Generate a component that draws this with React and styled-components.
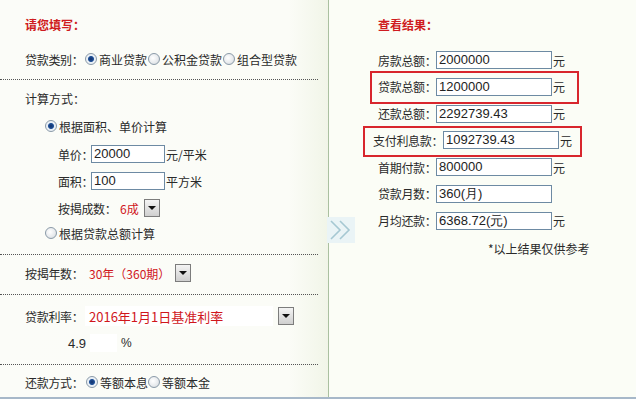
import styled, { createGlobalStyle } from 'styled-components'

const GlobalStyle = createGlobalStyle`
  html, body {
    margin: 0;
    padding: 0;
    background: #fbfdf6;
  }
  * {
    box-sizing: border-box;
  }
`

const Page = styled.div`
  display: flex;
  width: 636px;
  height: 399px;
  border-bottom: 2px solid #a7b8c9;
  font-family: "Noto Sans CJK SC", "Liberation Sans", sans-serif;
  font-size: 12px;
  color: #2a2a2a;
  overflow: hidden;
`

const LeftPanel = styled.div`
  width: 329px;
  flex-shrink: 0;
  display: flex;
  flex-direction: column;
  border-right: 1px solid #aac0a0;
  background: linear-gradient(to right, #fbfcf8 0%, #fbfcf7 88%, #f1f5e8 100%);
`

const RightPanel = styled.div`
  flex: 1;
  position: relative;
  display: flex;
  flex-direction: column;
  padding: 16px 0 0 49px;
  background: #fbfdf6;
`

const Section = styled.div`
  display: flex;
  flex-direction: column;
  margin-right: 10px;
  padding: ${p => p.$pt}px 0 ${p => p.$pb}px 25px;
  border-bottom: ${p => (p.$last ? 'none' : '1px dotted #555')};
`

const Title = styled.div`
  height: 18px;
  line-height: 18px;
  color: #cf1b20;
  font-weight: bold;
  font-size: 12px;
`

const Row = styled.div`
  display: flex;
  align-items: center;
  height: ${p => p.$h || 18}px;
  margin-top: ${p => p.$mt || 0}px;
  margin-left: ${p => p.$indent || 0}px;
  white-space: nowrap;
`

const Label = styled.span`
  display: inline-block;
  width: ${p => (p.$w ? `${p.$w}px` : 'auto')};
  letter-spacing: -0.3px;
`

const RedText = styled.span`
  color: #d0161c;
  margin-left: ${p => p.$ml || 0}px;
  font-size: ${p => p.$size || 12}px;
`

const RadioDot = styled.span`
  display: inline-block;
  width: 12px;
  height: 12px;
  margin: 0 2px 0 ${p => p.$ml || 0}px;
  border-radius: 50%;
  border: 1px solid #8a9aa8;
  background: ${p =>
    p.$checked
      ? 'radial-gradient(circle, #12306a 0, #1e4f96 2.5px, #e7eef5 3.5px, #f6f8fb 100%)'
      : 'radial-gradient(circle at 40% 40%, #ffffff 0, #e6e9ec 60%, #c9ced3 100%)'};
  flex-shrink: 0;
`

const TextBox = styled.div`
  width: ${p => p.$w}px;
  height: ${p => p.$h || 18}px;
  border: 1px solid #6d8aa3;
  background: #ffffff;
  font-family: "Liberation Sans", Arial, sans-serif;
  font-size: 13px;
  line-height: ${p => (p.$h || 18) - 2}px;
  padding-left: 2px;
  color: #222;
  flex-shrink: 0;
`

const Unit = styled.span`
  margin-left: 1px;
`

const DropButton = styled.span`
  display: inline-flex;
  align-items: center;
  justify-content: center;
  width: 16px;
  height: 18px;
  margin-left: ${p => p.$ml || 0}px;
  border: 1px solid #7c7c7c;
  background: linear-gradient(to bottom, #f4f4f4, #cfcfcf);
  flex-shrink: 0;

  &::after {
    content: '';
    border-left: 4px solid transparent;
    border-right: 4px solid transparent;
    border-top: 4px solid #111;
  }
`

const RateField = styled.div`
  display: flex;
  align-items: center;
  width: 188px;
  height: 20px;
  margin-left: 0;
  padding-left: 4px;
  background: #ffffff;
  color: #d0161c;
  font-size: 13px;
`

const RateValue = styled.span`
  margin-left: 43px;
  font-family: "Liberation Sans", Arial, sans-serif;
  font-size: 13px;
`

const RateBlank = styled.span`
  display: inline-block;
  width: 27px;
  height: 18px;
  margin-left: 4px;
  background: #ffffff;
`

const Percent = styled.span`
  margin-left: 4px;
  font-family: "Liberation Sans", Arial, sans-serif;
  font-size: 12px;
`

const ResultList = styled.div`
  display: flex;
  flex-direction: column;
  gap: 8.8px;
  margin-top: 17px;
`

const ResultRow = styled.div`
  position: relative;
  display: flex;
  align-items: center;
  height: 18px;
  margin-left: ${p => p.$shift || 0}px;
  white-space: nowrap;

  ${p =>
    p.$mark &&
    `
    &::after {
      content: '';
      position: absolute;
      left: ${p.$mark.left}px;
      top: ${p.$mark.top}px;
      width: ${p.$mark.width}px;
      height: ${p.$mark.height}px;
      border: 2px solid #d8262d;
      pointer-events: none;
    }
  `}
`

const Note = styled.div`
  margin: 11px 0 0 110px;
  height: 16px;
  line-height: 16px;
  font-size: 12px;
`

const Chevrons = styled.svg`
  position: absolute;
  left: -2px;
  top: 217px;
`

const results = [
  { label: '房款总额：', value: '2000000', unit: '元' },
  {
    label: '贷款总额：',
    value: '1200000',
    unit: '元',
    mark: { left: -8, top: -7, width: 205, height: 29 },
  },
  { label: '还款总额：', value: '2292739.43', unit: '元' },
  {
    label: '支付利息款：',
    value: '1092739.43',
    unit: '元',
    shift: -5,
    mark: { left: -10, top: -5, width: 215, height: 27 },
  },
  { label: '首期付款：', value: '800000', unit: '元' },
  { label: '贷款月数：', value: '360(月)', unit: '' },
  { label: '月均还款：', value: '6368.72(元)', unit: '元' },
]

const App = () => {
  return (
    <>
      <GlobalStyle />
      <Page>
        <LeftPanel>
          <Section $pt={16} $pb={11}>
            <Title>请您填写：</Title>
            <Row $mt={16}>
              <Label $w={60}>贷款类别：</Label>
              <RadioDot $checked />
              <span>商业贷款</span>
              <RadioDot $ml={1} />
              <span>公积金贷款</span>
              <RadioDot $ml={1} />
              <span>组合型贷款</span>
            </Row>
          </Section>

          <Section $pt={9} $pb={12}>
            <Row>计算方式：</Row>
            <Row $mt={10} $indent={20}>
              <RadioDot $checked />
              <span>根据面积、单价计算</span>
            </Row>
            <Row $mt={10} $indent={33}>
              <Label $w={33}>单价：</Label>
              <TextBox $w={74}>20000</TextBox>
              <Unit>元/平米</Unit>
            </Row>
            <Row $mt={9} $indent={33}>
              <Label $w={33}>面积：</Label>
              <TextBox $w={74}>100</TextBox>
              <Unit>平方米</Unit>
            </Row>
            <Row $h={20} $mt={8} $indent={33}>
              <Label $w={62}>按揭成数：</Label>
              <RedText $size={12}>6成</RedText>
              <DropButton $ml={5} />
            </Row>
            <Row $mt={6} $indent={20}>
              <RadioDot />
              <span>根据贷款总额计算</span>
            </Row>
          </Section>

          <Section $pt={8} $pb={11}>
            <Row $h={20}>
              <Label $w={64}>按揭年数：</Label>
              <RedText>30年（360期）</RedText>
              <DropButton $ml={5} />
            </Row>
          </Section>

          <Section $pt={11} $pb={12}>
            <Row $h={20}>
              <Label $w={60}>贷款利率：</Label>
              <RateField>2016年1月1日基准利率</RateField>
              <DropButton $ml={5} />
            </Row>
            <Row $mt={8}>
              <RateValue>4.9</RateValue>
              <RateBlank />
              <Percent>%</Percent>
            </Row>
          </Section>

          <Section $pt={8} $pb={0} $last>
            <Row>
              <Label $w={60}>还款方式：</Label>
              <RadioDot $checked $ml={1} />
              <span>等额本息</span>
              <RadioDot />
              <span>等额本金</span>
            </Row>
          </Section>
        </LeftPanel>

        <RightPanel>
          <Chevrons width="28" height="26" viewBox="0 0 28 26">
            <rect x="0" y="0" width="28" height="26" fill="#eaf4f6" />
            <path d="M4 4 L13 13 L4 22" fill="none" stroke="#a6c8d2" strokeWidth="1.6" />
            <path d="M13 4 L22 13 L13 22" fill="none" stroke="#a6c8d2" strokeWidth="1.6" />
          </Chevrons>
          <Title>查看结果：</Title>
          <ResultList>
            {results.map(r => (
              <ResultRow key={r.label} $shift={r.shift} $mark={r.mark}>
                <Label $w={r.shift ? 70 : 58}>{r.label}</Label>
                <TextBox $w={116} $h={18}>{r.value}</TextBox>
                <Unit>{r.unit}</Unit>
              </ResultRow>
            ))}
          </ResultList>
          <Note>*以上结果仅供参考</Note>
        </RightPanel>
      </Page>
    </>
  )
}

export default App
